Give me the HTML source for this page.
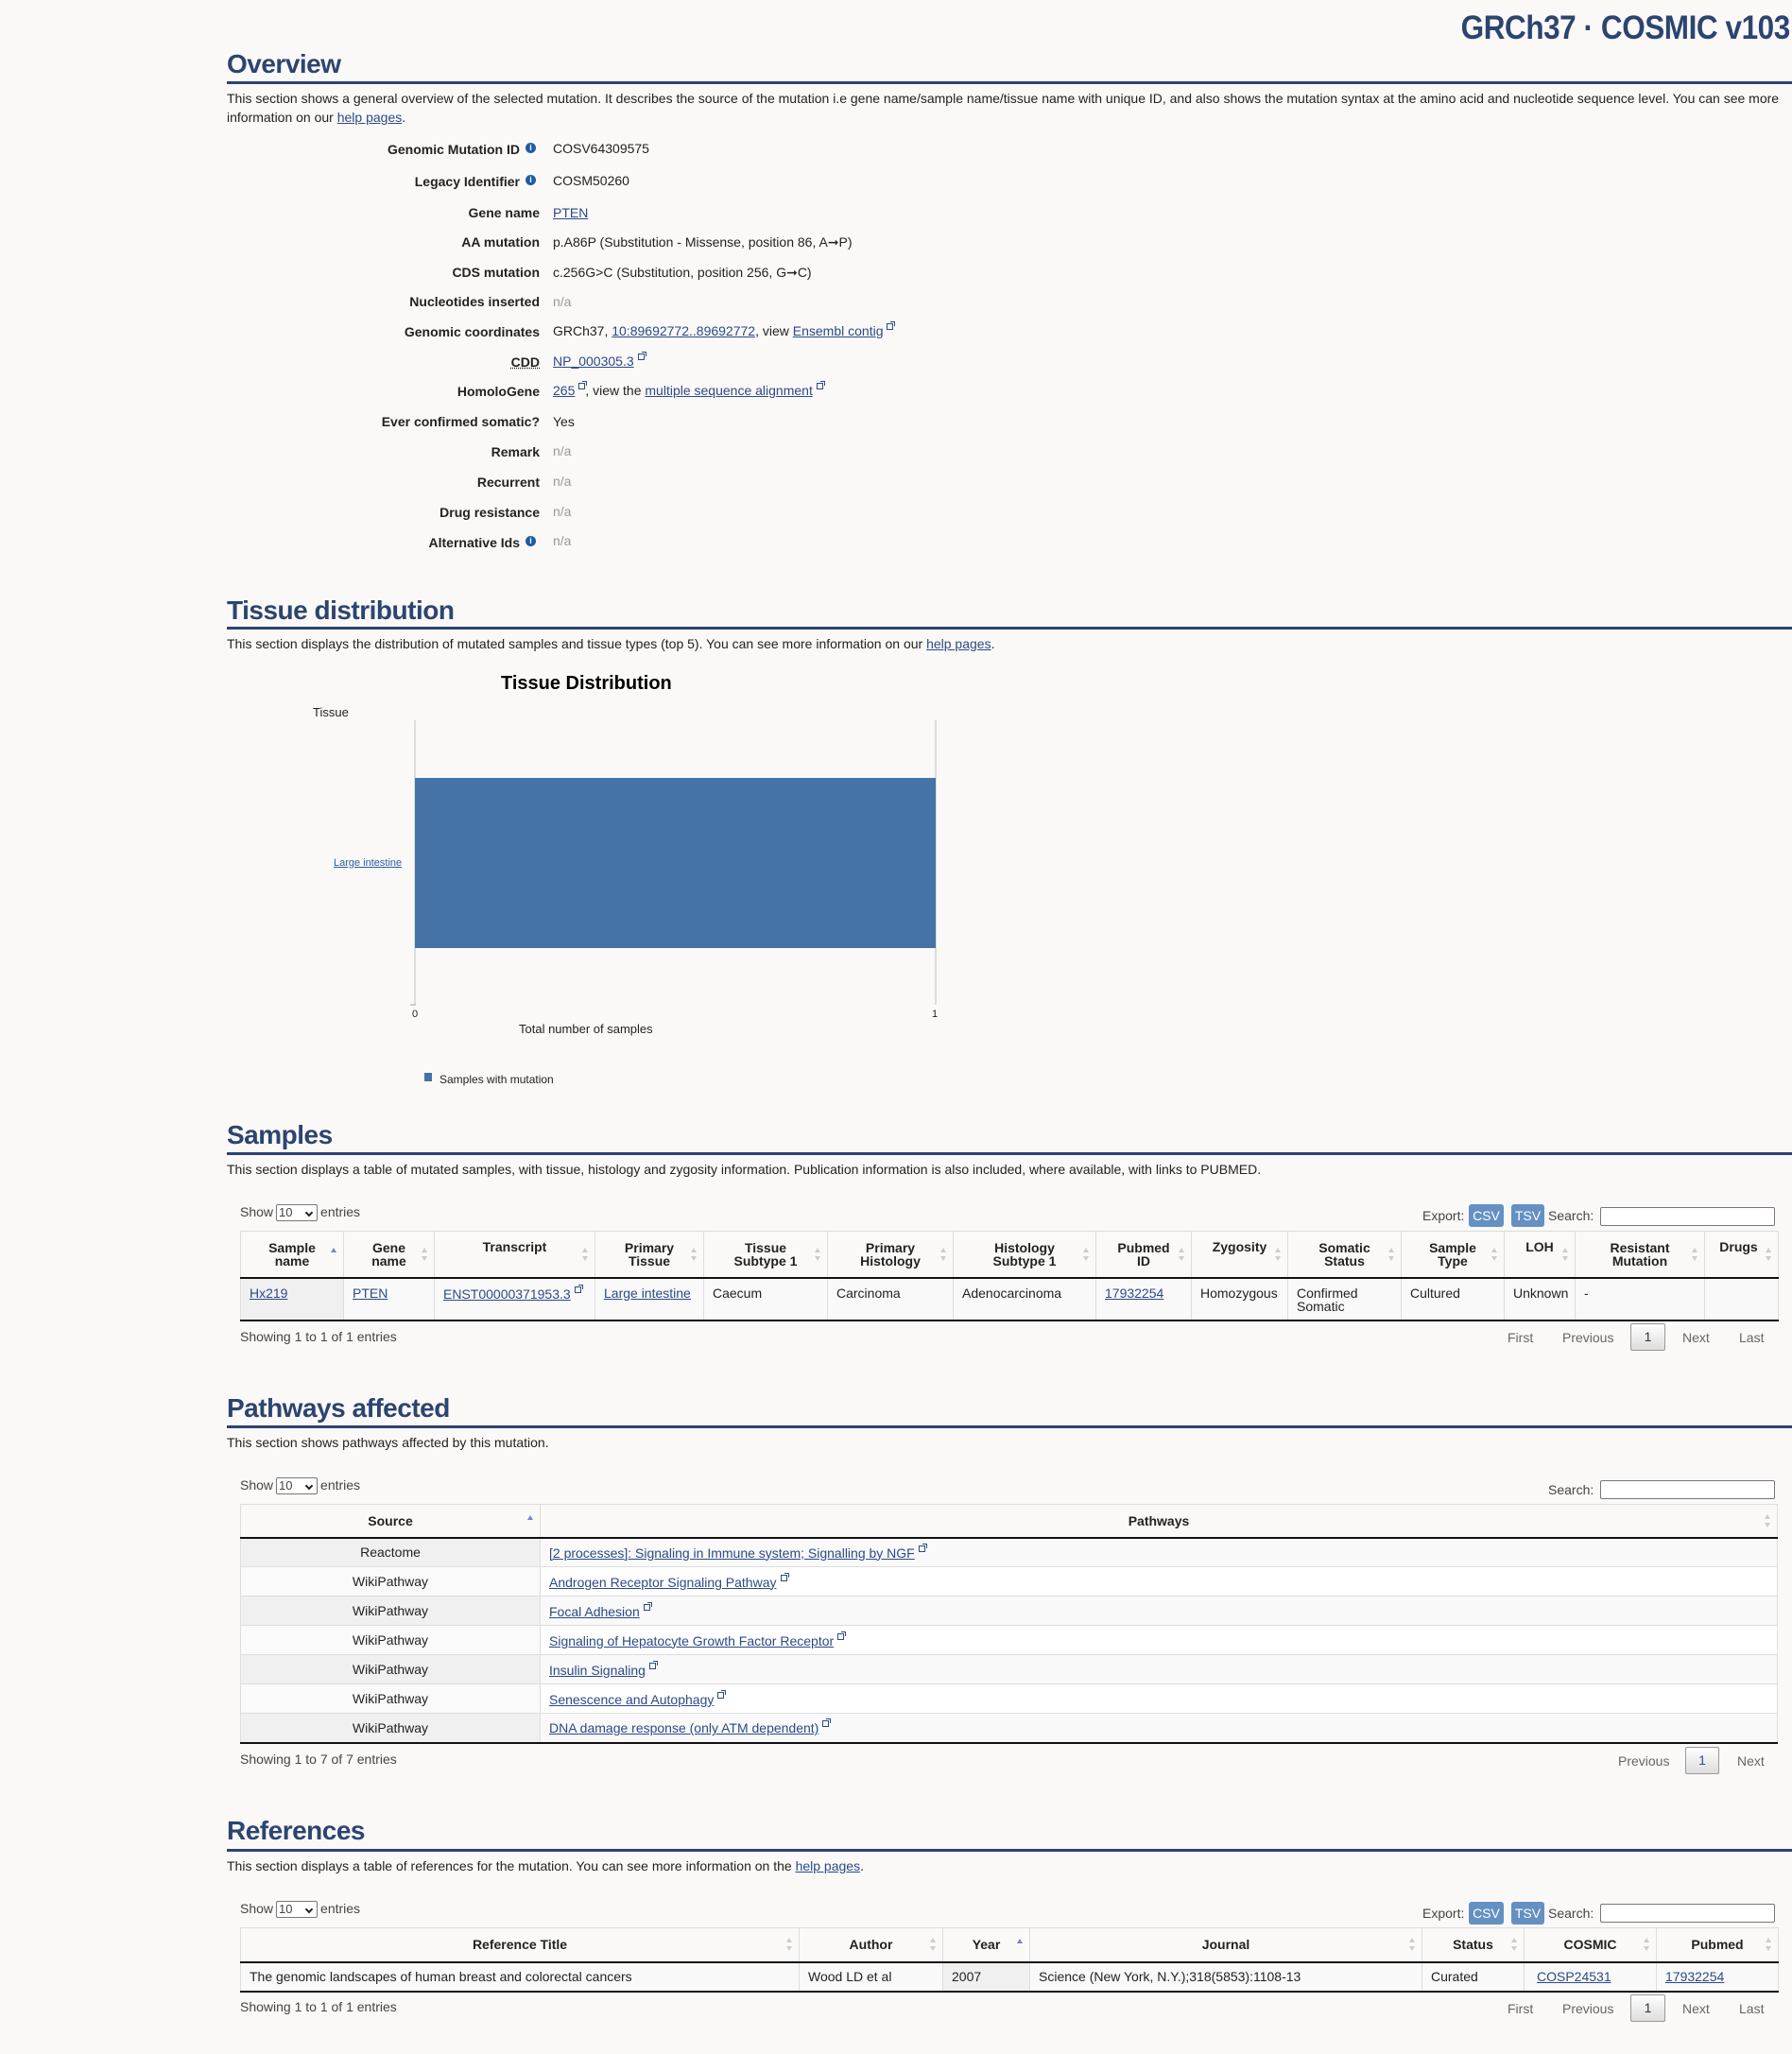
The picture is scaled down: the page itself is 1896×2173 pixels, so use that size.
<!DOCTYPE html>
<html><head><meta charset="utf-8">
<style>
*{box-sizing:border-box;margin:0;padding:0}
body{width:1896px;height:2173px;background:#faf9f8;font-family:"Liberation Sans",Arial,sans-serif;font-size:14px;color:#222;position:relative;overflow:hidden}
.a{position:absolute;white-space:nowrap}
a{color:#2c4a85;text-decoration:underline}
.t{position:absolute;right:2px;top:10px;font-size:35px;font-weight:bold;color:#2c4470;letter-spacing:-0.5px;transform:scaleX(0.9);transform-origin:right}
h2{position:absolute;left:240px;font-size:28px;font-weight:bold;color:#2c4470;letter-spacing:-0.5px}
.hl{position:absolute;left:240px;right:0;height:3px;background:#2c4470}
.lab{position:absolute;right:1325px;font-weight:bold;text-align:right;white-space:nowrap}
.val{position:absolute;left:585px;white-space:nowrap}
.na{color:#999}
.i{display:inline-block;width:11px;height:11px;border-radius:50%;background:#1f5ba5;color:#fff;font-size:9px;line-height:11px;text-align:center;font-weight:bold;vertical-align:4px;margin-left:6px}
.ext{display:inline-block;width:7px;height:7px;border:1px solid #2c4a85;margin-left:4px;vertical-align:6px;position:relative}
.ext:after{content:"";position:absolute;right:-3px;top:-3px;width:4px;height:4px;border-top:1px solid #2c4a85;border-right:1px solid #2c4a85}
.sel{display:inline-block;width:44px;height:18px;border:1px solid #777;border-radius:2px;background:#fff;font-size:13px;line-height:16px;padding-left:2px;vertical-align:middle;margin:0 3px;position:relative}
.sel:after{content:"";position:absolute;right:5px;top:5px;width:4px;height:4px;border-right:2px solid #222;border-bottom:2px solid #222;transform:rotate(45deg)}
.btn{position:absolute;background:#6490c2;color:#fff;border-radius:3px;height:24px;line-height:24px;font-size:14px;text-align:center}
.srch{position:absolute;border:1px solid #777;border-radius:2px;background:#fff;height:20px}
.dg{color:#444}
table{position:absolute;left:254px;width:1627px;border-collapse:collapse;table-layout:fixed}
th{font-weight:bold;font-size:14px;line-height:14px;border-top:1px solid #ddd;border-left:1px solid #ddd;border-bottom:2px solid #111;position:relative;vertical-align:middle;text-align:center;padding:0 14px}
th:last-child{border-right:1px solid #ddd}
th .s{position:absolute;right:6px;top:50%;margin-top:-8px;width:8px;height:16px}
th .s:before{content:"";position:absolute;left:1px;top:1px;border:3px solid transparent;border-bottom:5px solid #ccc;border-top:0}
th .s:after{content:"";position:absolute;left:1px;bottom:1px;border:3px solid transparent;border-top:5px solid #ccc;border-bottom:0}
th .up:before{border-bottom-color:#7b7fd6}
th .up:after{display:none}
td{border-left:1px solid #ddd;padding:0 9px;vertical-align:top;font-size:14px;line-height:14px}
td:last-child{border-right:1px solid #ddd}
tbody tr:last-child td{border-bottom:2px solid #111}
.pg{position:absolute;color:#666;font-size:14px}
.pb{position:absolute;border:1px solid #999;border-radius:2px;background:linear-gradient(#fff,#ddd);width:37px;height:29px;line-height:27px;text-align:center;color:#333}
</style></head><body>

<div class="t">GRCh37 · COSMIC v103</div>

<h2 style="top:52px">Overview</h2>
<div class="hl" style="top:86px"></div>
<div class="a" style="left:240px;top:94px;line-height:20px">This section shows a general overview of the selected mutation. It describes the source of the mutation i.e gene name/sample name/tissue name with unique ID, and also shows the mutation syntax at the amino acid and nucleotide sequence level. You can see more<br>information on our <a>help pages</a>.</div>

<div class="lab" style="top:150px;right:1329px">Genomic Mutation ID<span class="i">i</span></div><div class="val" style="top:149px">COSV64309575</div>
<div class="lab" style="top:184px;right:1329px">Legacy Identifier<span class="i">i</span></div><div class="val" style="top:183px">COSM50260</div>
<div class="lab" style="top:217px">Gene name</div><div class="val" style="top:217px"><a>PTEN</a></div>
<div class="lab" style="top:248px">AA mutation</div><div class="val" style="top:248px">p.A86P (Substitution - Missense, position 86, A➞P)</div>
<div class="lab" style="top:280px">CDS mutation</div><div class="val" style="top:280px">c.256G&gt;C (Substitution, position 256, G➞C)</div>
<div class="lab" style="top:311px">Nucleotides inserted</div><div class="val na" style="top:311px">n/a</div>
<div class="lab" style="top:343px">Genomic coordinates</div><div class="val" style="top:342px">GRCh37, <a>10:89692772..89692772</a>, view <a>Ensembl contig</a><span class="ext"></span></div>
<div class="lab" style="top:375px;text-decoration:underline dotted">CDD</div><div class="val" style="top:374px"><a>NP_000305.3</a><span class="ext"></span></div>
<div class="lab" style="top:406px">HomoloGene</div><div class="val" style="top:405px"><a>265</a><span class="ext"></span>, view the <a>multiple sequence alignment</a><span class="ext"></span></div>
<div class="lab" style="top:438px">Ever confirmed somatic?</div><div class="val" style="top:438px">Yes</div>
<div class="lab" style="top:470px">Remark</div><div class="val na" style="top:469px">n/a</div>
<div class="lab" style="top:502px">Recurrent</div><div class="val na" style="top:501px">n/a</div>
<div class="lab" style="top:534px">Drug resistance</div><div class="val na" style="top:533px">n/a</div>
<div class="lab" style="top:566px;right:1329px">Alternative Ids<span class="i">i</span></div><div class="val na" style="top:564px">n/a</div>

<h2 style="top:630px">Tissue distribution</h2>
<div class="hl" style="top:663px"></div>
<div class="a" style="left:240px;top:673px">This section displays the distribution of mutated samples and tissue types (top 5). You can see more information on our <a>help pages</a>.</div>

<div class="a" style="left:530px;top:712px;font-size:20px;font-weight:bold;color:#000">Tissue Distribution</div>
<div class="a" style="left:331px;top:746px;font-size:13px">Tissue</div>
<div class="a" style="left:438px;top:762px;width:2px;height:301px;background:#ddd"></div>
<div class="a" style="left:989px;top:762px;width:2px;height:301px;background:#ddd"></div>
<div class="a" style="left:434px;top:1062px;width:6px;height:2px;background:#ccc"></div>
<div class="a" style="left:439px;top:823px;width:551px;height:180px;background:#4673a7"></div>
<div class="a" style="left:353px;top:907px;font-size:11px"><a style="color:#2c5fa0">Large intestine</a></div>
<div class="a" style="left:436px;top:1067px;font-size:11px">0</div>
<div class="a" style="left:986px;top:1067px;font-size:11px">1</div>
<div class="a" style="left:549px;top:1081px;font-size:13px">Total number of samples</div>
<div class="a" style="left:449px;top:1135px;width:8px;height:9px;background:#4673a7"></div>
<div class="a" style="left:465px;top:1135px;font-size:12px">Samples with mutation</div>

<h2 style="top:1185px">Samples</h2>
<div class="hl" style="top:1219px"></div>
<div class="a" style="left:240px;top:1229px">This section displays a table of mutated samples, with tissue, histology and zygosity information. Publication information is also included, where available, with links to PUBMED.</div>

<div class="a dg" style="left:254px;top:1274px">Show<span class="sel">10</span>entries</div>
<div class="a dg" style="left:1505px;top:1278px">Export:</div>
<div class="btn" style="left:1554px;top:1274px;width:37px">CSV</div>
<div class="btn" style="left:1599px;top:1274px;width:35px">TSV</div>
<div class="a dg" style="left:1638px;top:1278px">Search:</div>
<div class="srch" style="left:1693px;top:1277px;width:185px"></div>

<table style="top:1302px">
<colgroup><col style="width:109px"><col style="width:96px"><col style="width:170px"><col style="width:115px"><col style="width:131px"><col style="width:133px"><col style="width:151px"><col style="width:101px"><col style="width:102px"><col style="width:120px"><col style="width:109px"><col style="width:75px"><col style="width:137px"><col style="width:78px"></colgroup>
<thead><tr style="height:49px">
<th>Sample name<span class="s up"></span></th><th>Gene name<span class="s"></span></th><th style="vertical-align:top;padding-top:9px">Transcript<span class="s"></span></th><th>Primary Tissue<span class="s"></span></th><th>Tissue Subtype 1<span class="s"></span></th><th>Primary Histology<span class="s"></span></th><th>Histology Subtype 1<span class="s"></span></th><th>Pubmed ID<span class="s"></span></th><th style="vertical-align:top;padding-top:9px">Zygosity<span class="s"></span></th><th>Somatic Status<span class="s"></span></th><th>Sample Type<span class="s"></span></th><th style="vertical-align:top;padding-top:9px">LOH<span class="s"></span></th><th>Resistant Mutation<span class="s"></span></th><th style="vertical-align:top;padding:9px 10px 0 4px">Drugs<span class="s"></span></th>
</tr></thead>
<tbody><tr style="height:45px;background:#f9f9f9">
<td style="background:#f0f0f0;padding-top:8px"><a>Hx219</a></td><td style="padding-top:8px"><a>PTEN</a></td><td style="padding-top:8px"><a>ENST00000371953.3</a><span class="ext"></span></td><td style="padding-top:8px"><a>Large intestine</a></td><td style="padding-top:8px">Caecum</td><td style="padding-top:8px">Carcinoma</td><td style="padding-top:8px">Adenocarcinoma</td><td style="padding-top:8px"><a>17932254</a></td><td style="padding-top:8px">Homozygous</td><td style="padding-top:8px">Confirmed Somatic</td><td style="padding-top:8px">Cultured</td><td style="padding-top:8px">Unknown</td><td style="padding-top:8px">-</td><td></td>
</tr></tbody></table>

<div class="a dg" style="left:254px;top:1406px">Showing 1 to 1 of 1 entries</div>
<div class="pg" style="left:1595px;top:1407px">First</div>
<div class="pg" style="left:1653px;top:1407px">Previous</div>
<div class="pb" style="left:1725px;top:1400px">1</div>
<div class="pg" style="left:1780px;top:1407px">Next</div>
<div class="pg" style="left:1840px;top:1407px">Last</div>

<h2 style="top:1474px">Pathways affected</h2>
<div class="hl" style="top:1508px"></div>
<div class="a" style="left:240px;top:1518px">This section shows pathways affected by this mutation.</div>

<div class="a dg" style="left:254px;top:1563px">Show<span class="sel">10</span>entries</div>
<div class="a dg" style="left:1638px;top:1568px">Search:</div>
<div class="srch" style="left:1693px;top:1566px;width:185px"></div>

<table style="top:1591px">
<colgroup><col style="width:317px"><col></colgroup>
<thead><tr style="height:35px"><th>Source<span class="s up" style="top:10px;margin-top:0"></span></th><th>Pathways<span class="s"></span></th></tr></thead>
<tbody>
<tr style="height:31px;background:#f9f9f9"><td style="text-align:center;background:#f0f0f0;border-bottom:1px solid #ddd;vertical-align:middle">Reactome</td><td style="border-bottom:1px solid #ddd;vertical-align:middle"><a>[2 processes]: Signaling in Immune system; Signalling by NGF</a><span class="ext"></span></td></tr>
<tr style="height:31px;background:#fff"><td style="text-align:center;background:#fafafa;border-bottom:1px solid #ddd;vertical-align:middle">WikiPathway</td><td style="border-bottom:1px solid #ddd;vertical-align:middle"><a>Androgen Receptor Signaling Pathway</a><span class="ext"></span></td></tr>
<tr style="height:31px;background:#f9f9f9"><td style="text-align:center;background:#f0f0f0;border-bottom:1px solid #ddd;vertical-align:middle">WikiPathway</td><td style="border-bottom:1px solid #ddd;vertical-align:middle"><a>Focal Adhesion</a><span class="ext"></span></td></tr>
<tr style="height:31px;background:#fff"><td style="text-align:center;background:#fafafa;border-bottom:1px solid #ddd;vertical-align:middle">WikiPathway</td><td style="border-bottom:1px solid #ddd;vertical-align:middle"><a>Signaling of Hepatocyte Growth Factor Receptor</a><span class="ext"></span></td></tr>
<tr style="height:31px;background:#f9f9f9"><td style="text-align:center;background:#f0f0f0;border-bottom:1px solid #ddd;vertical-align:middle">WikiPathway</td><td style="border-bottom:1px solid #ddd;vertical-align:middle"><a>Insulin Signaling</a><span class="ext"></span></td></tr>
<tr style="height:31px;background:#fff"><td style="text-align:center;background:#fafafa;border-bottom:1px solid #ddd;vertical-align:middle">WikiPathway</td><td style="border-bottom:1px solid #ddd;vertical-align:middle"><a>Senescence and Autophagy</a><span class="ext"></span></td></tr>
<tr style="height:31px;background:#f9f9f9"><td style="text-align:center;background:#f0f0f0;vertical-align:middle">WikiPathway</td><td style="vertical-align:middle"><a>DNA damage response (only ATM dependent)</a><span class="ext"></span></td></tr>
</tbody></table>

<div class="a dg" style="left:254px;top:1853px">Showing 1 to 7 of 7 entries</div>
<div class="pg" style="left:1712px;top:1855px">Previous</div>
<div class="pb" style="left:1783px;top:1848px;width:36px;color:#2c4a85">1</div>
<div class="pg" style="left:1838px;top:1855px">Next</div>

<h2 style="top:1921px">References</h2>
<div class="hl" style="top:1956px"></div>
<div class="a" style="left:240px;top:1966px">This section displays a table of references for the mutation. You can see more information on the <a>help pages</a>.</div>

<div class="a dg" style="left:254px;top:2011px">Show<span class="sel">10</span>entries</div>
<div class="a dg" style="left:1505px;top:2016px">Export:</div>
<div class="btn" style="left:1554px;top:2012px;width:37px">CSV</div>
<div class="btn" style="left:1599px;top:2012px;width:35px">TSV</div>
<div class="a dg" style="left:1638px;top:2016px">Search:</div>
<div class="srch" style="left:1693px;top:2014px;width:185px"></div>

<table style="top:2039px">
<colgroup><col style="width:591px"><col style="width:152px"><col style="width:92px"><col style="width:415px"><col style="width:108px"><col style="width:140px"><col style="width:129px"></colgroup>
<thead><tr style="height:36px"><th>Reference Title<span class="s"></span></th><th>Author<span class="s"></span></th><th>Year<span class="s up" style="top:10px;margin-top:0"></span></th><th>Journal<span class="s"></span></th><th>Status<span class="s"></span></th><th>COSMIC<span class="s"></span></th><th>Pubmed<span class="s"></span></th></tr></thead>
<tbody><tr style="height:31px;background:#f9f9f9">
<td style="vertical-align:middle">The genomic landscapes of human breast and colorectal cancers</td><td style="vertical-align:middle">Wood LD et al</td><td style="vertical-align:middle;background:#f0f0f0">2007</td><td style="vertical-align:middle">Science (New York, N.Y.);318(5853):1108-13</td><td style="vertical-align:middle">Curated</td><td style="vertical-align:middle;padding-left:13px"><a>COSP24531</a></td><td style="vertical-align:middle"><a>17932254</a></td>
</tr></tbody></table>

<div class="a dg" style="left:254px;top:2115px">Showing 1 to 1 of 1 entries</div>
<div class="pg" style="left:1595px;top:2117px">First</div>
<div class="pg" style="left:1653px;top:2117px">Previous</div>
<div class="pb" style="left:1725px;top:2110px">1</div>
<div class="pg" style="left:1780px;top:2117px">Next</div>
<div class="pg" style="left:1840px;top:2117px">Last</div>

</body></html>
